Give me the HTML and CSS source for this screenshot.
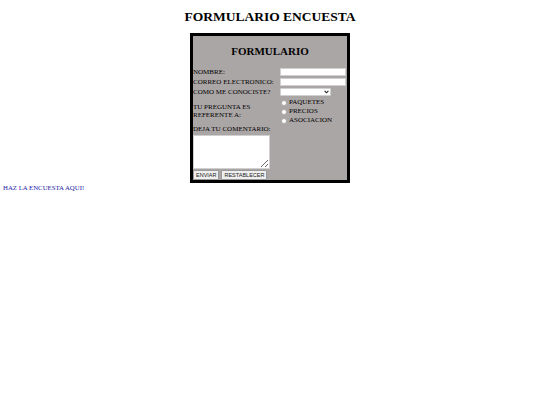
FILE: index.html
```html
<!DOCTYPE html>
<html>
<head>
<meta charset="utf-8">
<link rel="stylesheet" href="styles.css">
</head>
<body>
<h1 class="title">FORMULARIO ENCUESTA</h1>
<div class="wrap">
  <form class="box">
    <h2 class="sub">FORMULARIO</h2>
    <div class="row first">
      <span class="lab">NOMBRE:</span>
      <input class="txt" type="text">
    </div>
    <div class="row">
      <span class="lab">CORREO ELECTRONICO:</span>
      <input class="txt" type="text">
    </div>
    <div class="row">
      <span class="lab">COMO ME CONOCISTE?</span>
      <div class="selwrap">
        <select class="sel"><option></option></select>
        <svg class="chev" width="5" height="4" viewBox="0 0 5 4"><path d="M0.6 0.8 L2.5 2.8 L4.4 0.8" fill="none" stroke="#222" stroke-width="1.1"/></svg>
      </div>
    </div>
    <div class="row rowtop">
      <span class="lab lab2">TU PREGUNTA ES<br>REFERENTE A:</span>
      <div class="radios">
        <label class="rad"><span class="dot"></span>PAQUETES</label>
        <label class="rad"><span class="dot"></span>PRECIOS</label>
        <label class="rad"><span class="dot"></span>ASOCIACION</label>
      </div>
    </div>
    <div class="lab lab3">DEJA TU COMENTARIO:</div>
    <div class="areawrap">
      <textarea class="area"></textarea>
    </div>
    <div class="btns">
      <button type="submit" class="btn">ENVIAR</button>
      <button type="reset" class="btn">RESTABLECER</button>
    </div>
  </form>
</div>
<a class="link" href="#">HAZ LA ENCUESTA AQUI!</a>
</body>
</html>
```
FILE: styles.css
```css
html, body { margin: 0; padding: 0; background: #fff; }
body { font-family: "Liberation Serif", "Times New Roman", serif; color: #000; }
.title { margin: 0; padding-top: 9px; font-size: 13.5px; line-height: 15px; font-weight: bold; text-align: center; }
.wrap { display: flex; justify-content: center; margin-top: 9px; }
.box { width: 154px; height: 144px; border: 3px solid #000; background: #aba6a6; margin: 0; padding: 0; display: flex; flex-direction: column; overflow: hidden; }
.box > * { flex-shrink: 0; }
.sub { margin: 9px 0 0; font-size: 11px; line-height: 12px; font-weight: bold; text-align: center; }
.row { display: flex; align-items: center; justify-content: space-between; padding: 0 1px 0 0; height: 10px; }
.row.first { margin-top: 10px; }
.lab { font-size: 7px; line-height: 8px; color: #000; }
.txt { width: 66px; height: 8px; box-sizing: border-box; border: 1px solid #d0d0d0; background: #fff; padding: 0; margin: 0; }
.selwrap { position: relative; width: 66px; height: 8px; }
.sel { display: block; appearance: none; -webkit-appearance: none; width: 51px; height: 8px; box-sizing: border-box; border: 1px solid #d0d0d0; border-radius: 1px; background: #fff; padding: 0; margin: 0; font-size: 5px; }
.chev { position: absolute; left: 44px; top: 2px; }
.rowtop { height: 27px; align-items: flex-start; margin-top: 1px; }
.lab2 { margin-top: 5px; }
.radios { display: flex; flex-direction: column; width: 65px; }
.rad { font-size: 7px; line-height: 9px; display: flex; align-items: center; color: #000; }
.dot { width: 4px; height: 4px; border: 0.5px solid #aaa; border-radius: 50%; background: #fff; margin-right: 2px; }
.lab3 { margin-top: 0; }
.areawrap { display: flex; }
.area { width: 77px; height: 34px; margin: 2px 0 0 0; box-sizing: border-box; border: 1px solid #d0d0d0; background: #fff; padding: 0; resize: both; }
.btns { display: flex; gap: 2px; margin-top: 1px; }
.btn { font-family: "Liberation Sans", Arial, sans-serif; font-size: 5.5px; height: 10px; padding: 0 2px; margin: 0; border: 1px solid #999; border-radius: 1px; background: #efefef; color: #222; line-height: 8px; }
.link { display: block; margin: 1px 0 0 3px; font-size: 6.8px; color: #1a1aa8; text-decoration: underline; }
```
